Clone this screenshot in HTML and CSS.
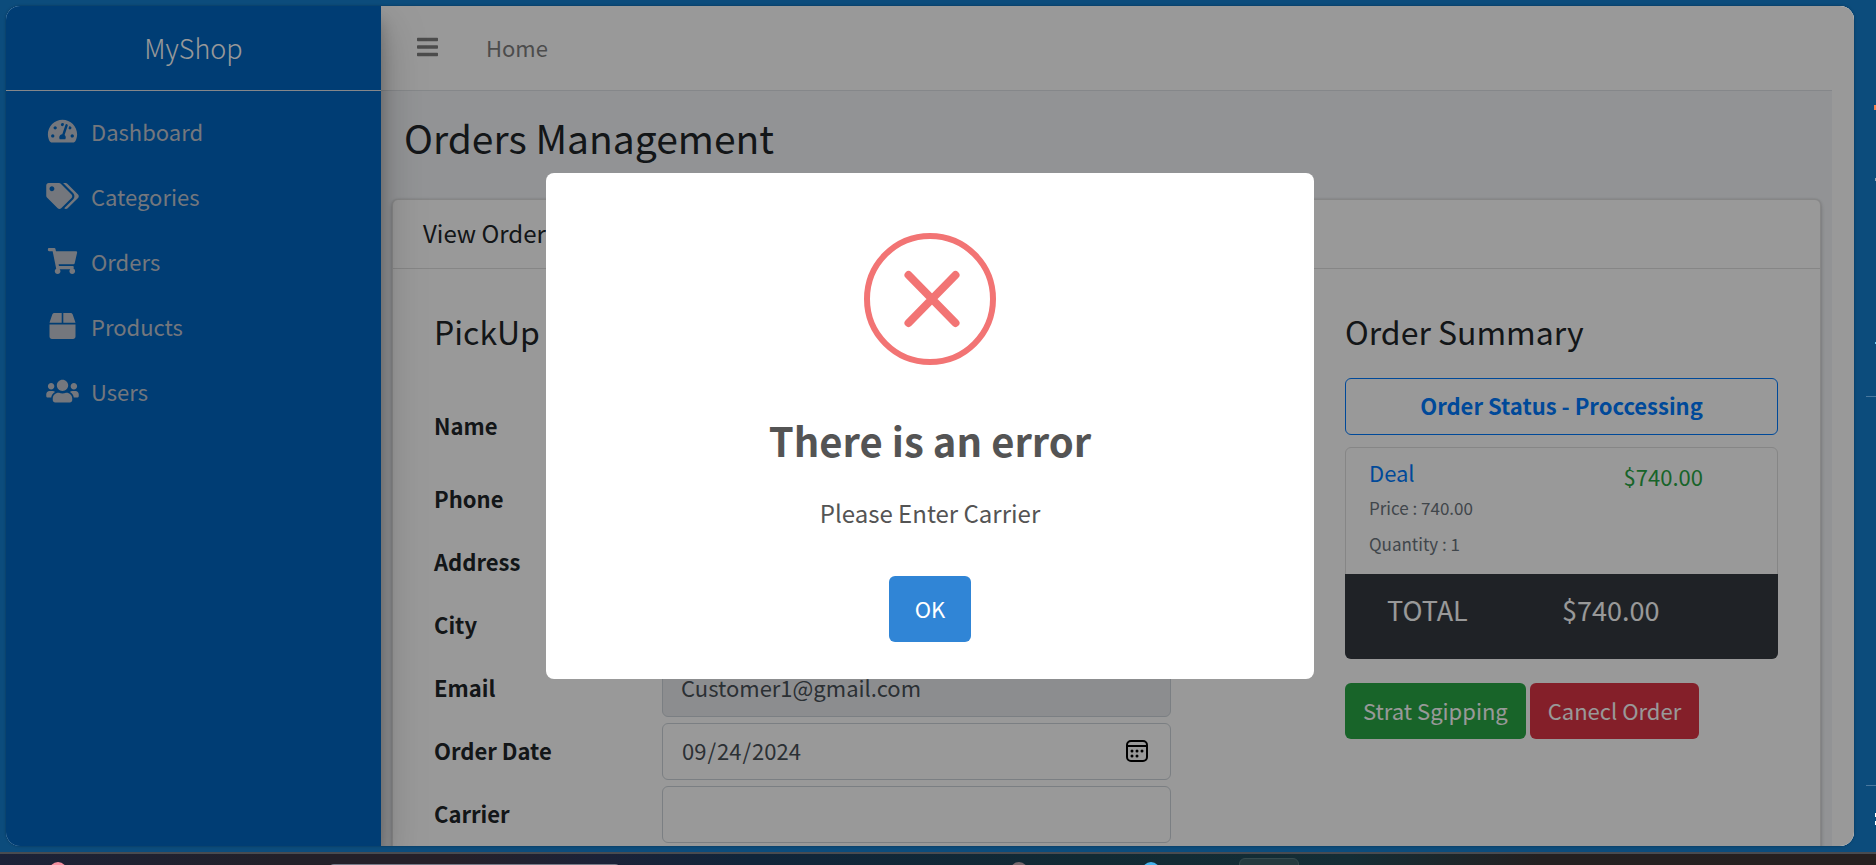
FILE: index.html
```html
<!DOCTYPE html>
<html lang="en">
<head>
<meta charset="utf-8">
<title>Orders Management</title>
<link rel="stylesheet" href="styles.css">
</head>
<body>
<div class="desktop">
  <div class="window">
    <aside class="sidebar">
      <a class="brand" href="#">MyShop</a>
      <nav class="menu">
        <a class="menu-link" href="#"><svg class="menu-icon" viewBox="-32 0 640 512"><path d="M288 32C128.94 32 0 160.94 0 320c0 52.8 14.25 102.26 39.06 144.8 5.61 9.62 16.3 15.2 27.44 15.2h443c11.14 0 21.83-5.58 27.44-15.2C561.75 422.26 576 372.8 576 320c0-159.06-128.94-288-288-288zm0 64c14.71 0 26.58 10.13 30.32 23.65-1.11 2.26-2.64 4.23-3.45 6.67l-9.22 27.67c-5.13 3.49-10.97 6.01-17.64 6.01-17.67 0-32-14.33-32-32S270.33 96 288 96zM96 384c-17.67 0-32-14.33-32-32s14.33-32 32-32 32 14.33 32 32-14.33 32-32 32zm48-160c-17.67 0-32-14.33-32-32s14.33-32 32-32 32 14.33 32 32-14.33 32-32 32zm246.77-72.41l-61.33 184C343.13 347.33 352 364.54 352 384c0 11.72-3.38 22.55-8.88 32H232.88c-5.5-9.45-8.88-20.28-8.88-32 0-33.94 26.5-61.43 59.9-63.59l61.34-184.01c4.17-12.56 17.73-19.45 30.36-15.17 12.57 4.19 19.35 17.79 15.17 30.36zm14.66 57.2l15.52-46.55c3.47-1.29 7.13-2.23 11.05-2.23 17.67 0 32 14.33 32 32s-14.33 32-32 32c-11.38-.01-20.89-6.28-26.57-15.22zM480 384c-17.67 0-32-14.33-32-32s14.33-32 32-32 32 14.33 32 32-14.33 32-32 32z"/></svg>Dashboard</a>
        <a class="menu-link" href="#"><svg class="menu-icon" viewBox="0 0 640 512"><path d="M497.941 225.941L286.059 14.059A48 48 0 0 0 252.118 0H48C21.49 0 0 21.49 0 48v204.118a48 48 0 0 0 14.059 33.941l211.882 211.882c18.744 18.745 49.136 18.746 67.882 0l204.118-204.118c18.745-18.745 18.745-49.137 0-67.882zM112 160c-26.51 0-48-21.49-48-48s21.49-48 48-48 48 21.49 48 48-21.49 48-48 48zm513.941 133.823L421.823 497.941c-18.745 18.745-49.137 18.745-67.882 0l-.36-.36L527.64 323.522c16.999-16.999 26.36-39.6 26.36-63.64s-9.362-46.641-26.36-63.64L331.397 0h48.721a48 48 0 0 1 33.941 14.059l211.882 211.882c18.745 18.745 18.745 49.137 0 67.882z"/></svg>Categories</a>
        <a class="menu-link" href="#"><svg class="menu-icon" viewBox="-32 0 640 512"><path d="M528.12 301.319l47.273-208C578.806 78.301 567.391 64 551.99 64H159.208l-9.166-44.81C147.758 8.021 137.93 0 126.529 0H24C10.745 0 0 10.745 0 24v16c0 13.255 10.745 24 24 24h69.883l70.248 343.435C147.325 417.1 136 435.222 136 456c0 30.928 25.072 56 56 56s56-25.072 56-56c0-15.674-6.447-29.835-16.824-40h209.647C430.447 426.165 424 440.326 424 456c0 30.928 25.072 56 56 56s56-25.072 56-56c0-22.172-12.888-41.332-31.579-50.405l5.517-24.276c3.413-15.018-8.002-29.319-23.403-29.319H218.117l-6.545-32h293.145c11.206 0 20.92-7.754 23.403-18.681z"/></svg>Orders</a>
        <a class="menu-link" href="#"><svg class="menu-icon" viewBox="-64 0 640 512"><path d="M509.5 184.6L458.9 32.8C452.4 13.2 434.1 0 413.4 0H272v192h238.7c-.4-2.5-.4-5-1.2-7.4zM240 0H98.6c-20.7 0-39 13.2-45.5 32.8L2.5 184.6c-.8 2.4-.8 4.9-1.2 7.4H240V0zM0 224v240c0 26.5 21.5 48 48 48h416c26.5 0 48-21.5 48-48V224H0z"/></svg>Products</a>
        <a class="menu-link" href="#"><svg class="menu-icon" viewBox="0 0 640 512"><path d="M96 224c35.3 0 64-28.7 64-64s-28.7-64-64-64-64 28.7-64 64 28.7 64 64 64zm448 0c35.3 0 64-28.7 64-64s-28.7-64-64-64-64 28.7-64 64 28.7 64 64 64zm32 32h-64c-17.6 0-33.5 7.1-45.1 18.6 40.3 22.1 68.9 62 75.1 109.4h66c17.7 0 32-14.3 32-32v-32c0-35.3-28.7-64-64-64zm-256 0c61.9 0 112-50.1 112-112S381.9 32 320 32 208 82.1 208 144s50.1 112 112 112zm76.8 32h-8.3c-20.8 10-43.9 16-68.5 16s-47.6-6-68.5-16h-8.3C179.6 288 128 339.6 128 403.2V432c0 26.5 21.5 48 48 48h288c26.5 0 48-21.5 48-48v-28.8c0-63.6-51.6-115.2-115.2-115.2zm-223.7-13.4C161.5 263.1 145.6 256 128 256H64c-35.3 0-64 28.7-64 64v32c0 17.7 14.3 32 32 32h65.9c6.3-47.4 34.9-87.3 75.2-109.4z"/></svg>Users</a>
      </nav>
    </aside>

    <main class="main">
      <header class="topbar">
        <button class="menu-toggle" type="button" aria-label="Toggle menu"><svg class="bars" viewBox="0 0 448 512"><path d="M16 132h416c8.837 0 16-7.163 16-16V76c0-8.837-7.163-16-16-16H16C7.163 60 0 67.163 0 76v40c0 8.837 7.163 16 16 16zm0 160h416c8.837 0 16-7.163 16-16v-40c0-8.837-7.163-16-16-16H16c-8.837 0-16 7.163-16 16v40c0 8.837 7.163 16 16 16zm0 160h416c8.837 0 16-7.163 16-16v-40c0-8.837-7.163-16-16-16H16c-8.837 0-16 7.163-16 16v40c0 8.837 7.163 16 16 16z"/></svg></button>
        <a class="home-link" href="#">Home</a>
      </header>
      <h1 class="page-title">Orders Management</h1>

      <section class="card">
        <h2 class="card-title">View Order</h2>
        <div class="card-body">
          <form class="pickup">
            <h3 class="section-title">PickUp</h3>
            <div class="field field-first"><label for="name">Name</label><input class="control" id="name" type="text" disabled></div>
            <div class="field"><label for="phone">Phone</label><input class="control" id="phone" type="text" disabled></div>
            <div class="field"><label for="address">Address</label><input class="control" id="address" type="text" disabled></div>
            <div class="field"><label for="city">City</label><input class="control" id="city" type="text" disabled></div>
            <div class="field"><label for="email">Email</label><input class="control" id="email" type="text" value="Customer1@gmail.com" disabled></div>
            <div class="field"><label for="date">Order Date</label>
              <div class="date-wrap">
                <input class="control" id="date" type="date" value="2024-09-24">
                <svg class="calendar" viewBox="0 0 22 22"><rect x="1" y="1" width="20" height="20" rx="4" fill="none" stroke="#000" stroke-width="2"/><path d="M1 6h20" stroke="#000" stroke-width="2"/><g><circle cx="6" cy="11" r="1.5"/><circle cx="11" cy="11" r="1.5"/><circle cx="16" cy="11" r="1.5"/><circle cx="6" cy="16" r="1.5"/><circle cx="11" cy="16" r="1.5"/></g></svg>
              </div>
            </div>
            <div class="field"><label for="carrier">Carrier</label><input class="control" id="carrier" type="text"></div>
          </form>

          <section class="summary">
            <h3 class="section-title">Order Summary</h3>
            <button class="status" type="button">Order Status - Proccessing</button>
            <div class="receipt">
              <div class="item">
                <div>
                  <a class="item-name" href="#">Deal</a>
                  <p class="item-note">Price : 740.00</p>
                  <p class="item-note">Quantity : 1</p>
                </div>
                <div class="item-price">$740.00</div>
              </div>
              <div class="total"><span>TOTAL</span><span>$740.00</span></div>
            </div>
            <div class="actions">
              <button class="action ship" type="button">Strat Sgipping</button>
              <button class="action cancel" type="button">Canecl Order</button>
            </div>
          </section>
        </div>
      </section>
    </main>
    <div class="scroll-gutter"></div>

    <div class="backdrop">
      <div class="dialog" role="alertdialog" aria-labelledby="dialog-title" aria-describedby="dialog-text">
        <svg class="error-icon" viewBox="0 0 132 132"><circle cx="66" cy="66" r="63" fill="none" stroke="#f27474" stroke-width="6"/><path d="M44.500 42L91.500 90M91.500 42L44.500 90" stroke="#f27474" stroke-width="8" stroke-linecap="round"/></svg>
        <h2 class="dialog-title" id="dialog-title">There is an error</h2>
        <p class="dialog-text" id="dialog-text">Please Enter Carrier</p>
        <button class="ok" type="button">OK</button>
      </div>
    </div>
  </div>

  <div class="edge">
    <span class="dot dot-orange"></span>
    <span class="dot dot-gray"></span>
    <span class="dot dot-cyan"></span>
    <span class="rule rule-top"></span>
    <span class="rule rule-bottom"></span>
    <span class="dot dot-white"></span>
    <span class="dot dot-white dot-low"></span>
  </div>
</div>
<div class="taskbar">
  <span class="task-search"></span>
  <span class="task-dot task-pink"></span>
  <span class="task-dot task-gray"></span>
  <span class="task-dot task-blue"></span>
  <span class="task-active"></span>
</div>
</body>
</html>
```
FILE: styles.css
```css
* {
  box-sizing: border-box;
}

body {
  margin: 0;
  height: 100vh;
  display: flex;
  flex-direction: column;
  overflow: hidden;
  background: #0c4c7c;
  color: #212529;
  font-family: "Noto Sans CJK SC", "Noto Sans", sans-serif;
  font-size: 22px;
  line-height: 36px;
}

h1, h2, h3, p {
  margin: 0;
  font-weight: 400;
}

a {
  text-decoration: none;
}

button, input {
  font: inherit;
}

/* Browser window */
.desktop {
  position: relative;
  flex: 1;
  min-height: 0;
  display: flex;
  padding: 6px 22px 6px 6px;
}

.window {
  position: relative;
  flex: 1;
  min-width: 0;
  display: flex;
  overflow: hidden;
  border-radius: 14px;
  background: #fff;
  box-shadow: 0 0 3px rgba(0, 0, 0, .3);
}

.scroll-gutter {
  width: 22px;
  background: #fff;
}

/* Sidebar */
.sidebar {
  z-index: 1;
  width: 375px;
  flex: none;
  background: #0066c2;
  box-shadow: 0 21px 42px rgba(0, 0, 0, .25), 0 15px 15px rgba(0, 0, 0, .22);
}

.brand {
  display: block;
  height: 85px;
  border-bottom: 1px solid #dee2e6;
  color: #fff;
  font-size: 27px;
  font-weight: 300;
  line-height: 84px;
  text-align: center;
}

.menu {
  display: flex;
  flex-direction: column;
  gap: 5px;
  padding: 11px 12px;
}

.menu-link {
  display: flex;
  align-items: center;
  gap: 12px;
  padding: 11px 28px 13px;
  color: #c2c7d0;
}

.menu-icon {
  width: 33px;
  height: 26px;
  fill: currentColor;
}

/* Main column */
.main {
  flex: 1;
  min-width: 0;
  overflow: hidden;
  background: #f4f6f9;
}

.topbar {
  display: flex;
  align-items: center;
  gap: 48px;
  height: 85px;
  padding: 0 36px 2px;
  border-bottom: 1px solid #dee2e6;
  background: #fff;
}

.menu-toggle {
  display: flex;
  padding: 0;
  border: 0;
  background: none;
}

.bars {
  width: 21px;
  height: 24px;
  fill: #7f7f7f;
}

.home-link {
  color: #7f7f7f;
}

.page-title {
  padding: 20px 23px 28px;
  font-size: 39px;
  line-height: 52px;
}

.card {
  margin: 8px 11px 0;
  border: 1px solid #dfdfdf;
  border-radius: 6px;
  background: #fff;
  box-shadow: 0 0 2px rgba(0, 0, 0, .13), 0 2px 5px rgba(0, 0, 0, .2);
}

.card-title {
  padding: 14px 30px 17px;
  border-bottom: 1px solid #dfdfdf;
  font-size: 24px;
  line-height: 37px;
}

.card-body {
  display: grid;
  grid-template-columns: 737fr 433fr;
  column-gap: 174px;
  padding: 41px 42px 41px 41px;
}

.section-title {
  margin-bottom: 25px;
  font-size: 32px;
  line-height: 43px;
}

/* Form */
.pickup .section-title {
  margin-bottom: 45px;
}

.field {
  display: grid;
  grid-template-columns: 228px 1fr;
  align-items: center;
  margin-bottom: 6px;
  font-weight: 700;
}

.field label {
  padding-bottom: 4px;
}

.field-first {
  margin-bottom: 16px;
}

.control {
  display: block;
  width: 100%;
  height: 57px;
  padding: 7px 18px 11px;
  border: 1px solid #ced4da;
  border-radius: 6px;
  background: #fff;
  color: #495057;
  font-weight: 400;
}

.control:disabled {
  background: #e9ecef;
}

.date-wrap {
  position: relative;
}

.control::-webkit-calendar-picker-indicator {
  opacity: 0;
}

.calendar {
  position: absolute;
  top: 17px;
  right: 23px;
  width: 22px;
  height: 22px;
  pointer-events: none;
}

/* Order summary */
.status {
  display: block;
  width: 100%;
  height: 57px;
  margin-bottom: 12px;
  padding-bottom: 5px;
  border: 1px solid #007bff;
  border-radius: 6px;
  background: none;
  color: #007bff;
  font-weight: 700;
}

.receipt {
  border: 1px solid #dfdfdf;
  border-radius: 6px;
}

.item {
  display: flex;
  justify-content: space-between;
  padding: 6px 74px 12px 23px;
}

.item-name {
  display: block;
  color: #007bff;
}

.item-note {
  color: #6c757d;
  font-size: 17px;
}

.item-price {
  padding-top: 4px;
  color: #28a745;
}

.total {
  display: grid;
  grid-template-columns: 175px 1fr;
  margin: 0 -1px -1px;
  padding: 18px 42px 31px;
  border-radius: 0 0 6px 6px;
  background: #343a40;
  color: #fff;
  font-size: 27px;
}

.actions {
  display: flex;
  gap: 4px;
  margin-top: 24px;
}

.action {
  height: 56px;
  padding: 0 18px 2px;
  border: 0;
  border-radius: 6px;
  color: #fff;
}

.ship {
  background: #28a745;
}

.cancel {
  background: #dc3545;
}

/* Alert */
.backdrop {
  position: absolute;
  inset: 0;
  z-index: 2;
  display: flex;
  align-items: center;
  justify-content: center;
  background: rgba(0, 0, 0, .4);
}

.dialog {
  display: flex;
  flex-direction: column;
  align-items: center;
  width: 768px;
  max-width: 100%;
  padding: 60px 30px 37px;
  border-radius: 8px;
  background: #fff;
  color: #545454;
}

.error-icon {
  width: 132px;
  height: 132px;
}

.dialog-title {
  margin-top: 45px;
  font-size: 40px;
  font-weight: 700;
  line-height: 60px;
}

.dialog-text {
  margin-top: 23px;
  font-size: 24px;
  line-height: 40px;
}

.ok {
  margin-top: 43px;
  height: 66px;
  padding: 0 26px 2px;
  border: 0;
  border-radius: 6px;
  background: #3085d6;
  color: #fff;
  font-weight: 400;
}

/* Browser side strip */
.edge {
  position: absolute;
  top: 0;
  right: 0;
  bottom: 0;
  width: 10px;
}

.dot {
  position: absolute;
  right: 0;
  width: 1px;
  height: 5px;
}

.dot-orange { top: 105px; width: 2px; background: #f08050; }
.dot-gray { top: 178px; height: 3px; background: #8fa3b3; }
.dot-cyan { top: 342px; height: 2px; background: #6cc8f0; }
.dot-white { top: 813px; height: 4px; background: #fff; }
.dot-low { top: 821px; }

.rule {
  position: absolute;
  left: 0;
  right: 0;
  height: 1px;
  background: #49789e;
}

.rule-top { top: 396px; }
.rule-bottom { top: 785px; }

/* Taskbar */
.taskbar {
  position: relative;
  flex: none;
  height: 13px;
  overflow: hidden;
  border-top: 2px solid #484b50;
  background: linear-gradient(90deg, #1b2238 0, #222029 15%, #252029 24%, #1b2238 32%, #10253a 40%, #112a34 58%, #142d35 72%, #232021 82%, #262020 100%);
}

.task-search {
  position: absolute;
  left: 328px;
  top: 10px;
  width: 293px;
  height: 12px;
  border-top: 1px solid #777a88;
  border-radius: 6px;
}

.task-dot {
  position: absolute;
  top: 8px;
  width: 18px;
  height: 18px;
  border-radius: 50%;
}

.task-pink { left: 49px; background: #f590a0; }
.task-gray { left: 1010px; background: #76696e; }
.task-blue { left: 1142px; background: #45b4ee; }

.task-active {
  position: absolute;
  left: 1239px;
  top: 4px;
  width: 60px;
  height: 20px;
  border: 1px solid #344a4e;
  border-radius: 6px;
  background: #243a3f;
}
```
